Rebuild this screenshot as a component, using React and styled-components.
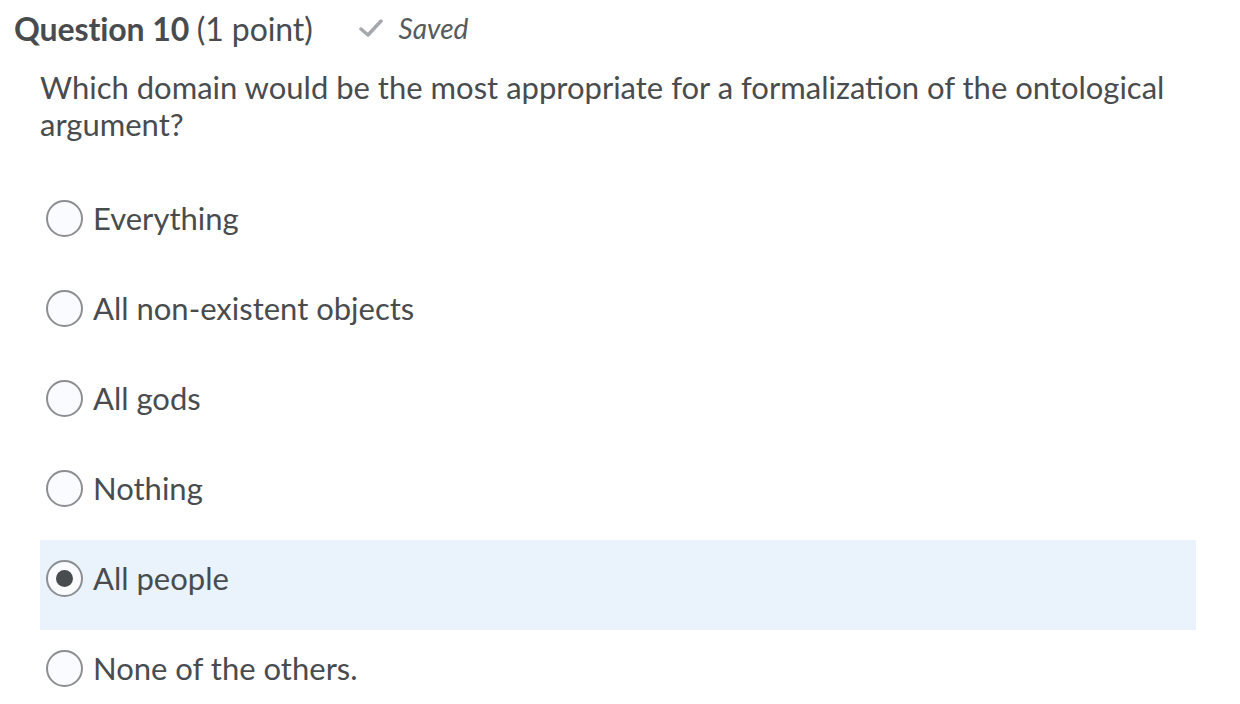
import React, { useState } from 'react';
import styled, { createGlobalStyle } from 'styled-components';

const options = [
  'Everything',
  'All non-existent objects',
  'All gods',
  'Nothing',
  'All people',
  'None of the others.',
];

const GlobalStyle = createGlobalStyle`
  html, body {
    margin: 0;
    padding: 0;
    background: #fff;
  }
  body {
    font-family: Lato, "Open Sans", sans-serif;
    color: #494c4e;
  }
`;

const Page = styled.div`
  padding: 8px 0 0 14px;
  width: 1182px;
`;

const Header = styled.div`
  display: flex;
  align-items: center;
  height: 40px;
`;

const Title = styled.h2`
  margin: 0;
  font-size: 32px;
  font-weight: 700;
  letter-spacing: -0.1px;
`;

const Points = styled.span`
  font-weight: 400;
`;

const SavedTag = styled.span`
  display: flex;
  align-items: center;
  gap: 16px;
  margin-left: 46px;
  font-size: 28px;
  font-style: italic;
  color: #565a5c;
`;

const Prompt = styled.p`
  margin: 21px 0 0 26px;
  font-size: 31px;
  line-height: 37px;
`;

const OptionList = styled.div`
  margin: 37px 0 0 26px;
  display: flex;
  flex-direction: column;
`;

const Option = styled.label`
  box-sizing: border-box;
  display: flex;
  align-items: flex-start;
  gap: 10px;
  height: 90px;
  padding: 20px 0 0 6px;
  font-size: 31px;
  line-height: 37px;
  background: ${p => (p.$selected ? '#eaf2fc' : 'transparent')};
  cursor: pointer;
`;

const Radio = styled.span`
  box-sizing: border-box;
  flex: none;
  width: 37px;
  height: 37px;
  border-radius: 50%;
  border: 2px solid #8c8f92;
  background: #f9fbff;
  display: flex;
  align-items: center;
  justify-content: center;

  &::after {
    content: '';
    width: 17px;
    height: 17px;
    border-radius: 50%;
    background: #494c4e;
    display: ${p => (p.$checked ? 'block' : 'none')};
  }
`;

function Check() {
  return (
    <svg width="24" height="20" viewBox="0 0 24 20">
      <path d="M2 11 L9 17 L22 3" fill="none" stroke="#a5a9ad" strokeWidth="3.5" strokeLinecap="round" strokeLinejoin="round" />
    </svg>
  );
}

export default function App() {
  const [choice, setChoice] = useState(4);
  return (
    <>
      <GlobalStyle />
      <Page>
        <Header>
          <Title>
            Question 10 <Points>(1 point)</Points>
          </Title>
          <SavedTag>
            <Check />
            Saved
          </SavedTag>
        </Header>
        <Prompt>
          Which domain would be the most appropriate for a formalization of the ontological argument?
        </Prompt>
        <OptionList>
          {options.map((o, i) => (
            <Option key={o} $selected={i === choice} onClick={() => setChoice(i)}>
              <Radio $checked={i === choice} />
              {o}
            </Option>
          ))}
        </OptionList>
      </Page>
    </>
  );
}
